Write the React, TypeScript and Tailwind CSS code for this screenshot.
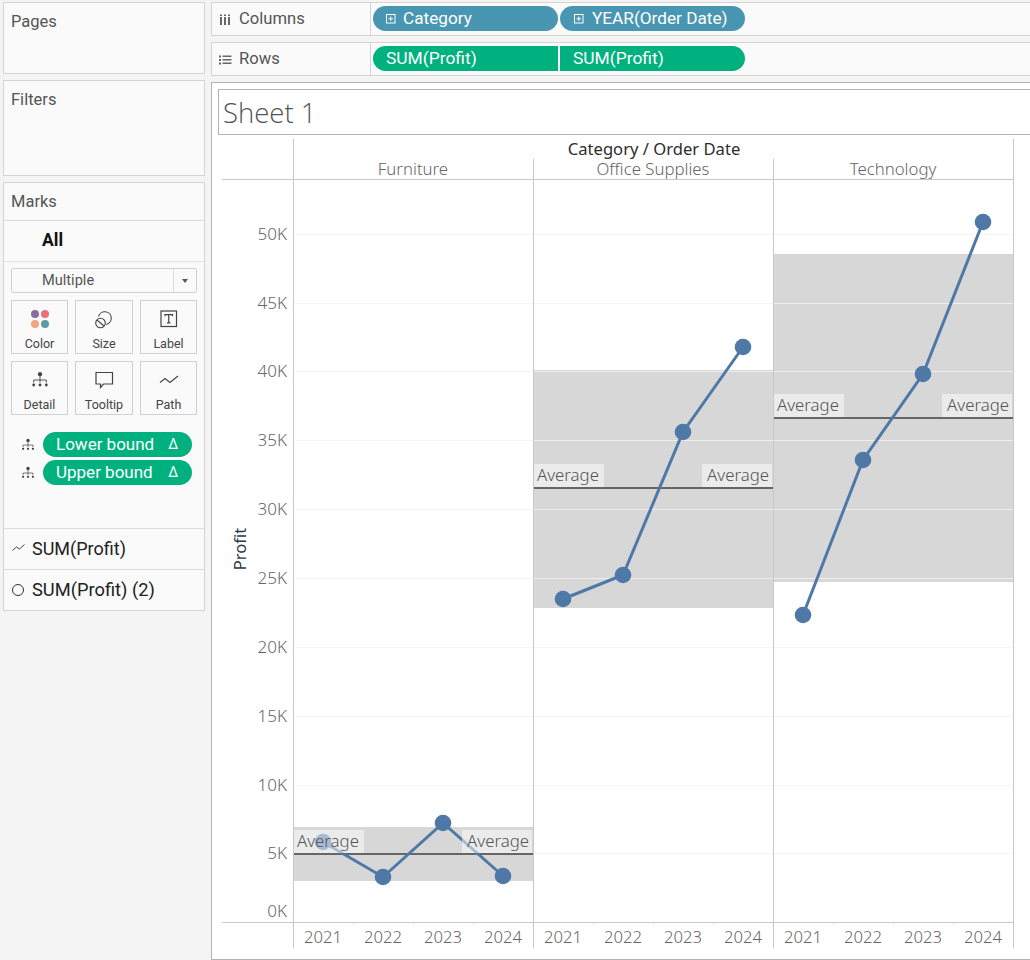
import React from "react";

const BLUE = "#4e79a7";
const F = "'Roboto', 'Liberation Sans', sans-serif";
const C = "'Noto Sans', 'Open Sans', sans-serif";

const ticks = [
  ["50K", 234.5], ["45K", 303.5], ["40K", 371.5], ["35K", 440.5], ["30K", 509.5],
  ["25K", 578.5], ["20K", 647.5], ["15K", 716.5], ["10K", 785.5], ["5K", 853.5],
] as const;

const panes = [
  { x: 293, name: "Furniture", band: [827, 881], avg: 854, labelY: 830, pts: [[323, 842], [383, 877], [443, 823], [503, 876]] },
  { x: 533, name: "Office Supplies", band: [370, 608], avg: 488, labelY: 464, pts: [[563, 599], [623, 575], [683, 432], [743, 347]] },
  { x: 773, name: "Technology", band: [254, 582], avg: 418, labelY: 394, pts: [[803, 615], [863, 460], [923, 374], [983, 222]] },
];

function Panel({ title, className }: { title: string; className: string }) {
  return (
    <div className={`border border-[#d4d4d4] bg-[#fafafa] px-[7px] pt-[9px] text-[16.5px] leading-[20px] text-[#555] ${className}`}>
      {title}
    </div>
  );
}

function Tree({ size = 20 }: { size?: number }) {
  return (
    <svg width={size} height={size} viewBox="0 0 20 20" fill="#444" stroke="#444">
      <circle cx="10" cy="3.5" r="2.4" stroke="none" />
      <path d="M10 5v8M3 10h14M3 10v3M17 10v3" fill="none" strokeWidth="1" />
      <circle cx="3" cy="15.5" r="1.6" stroke="none" />
      <circle cx="10" cy="15.5" r="1.6" stroke="none" />
      <circle cx="17" cy="15.5" r="1.6" stroke="none" />
    </svg>
  );
}

function MarkButton({ label, children }: { label: string; children: React.ReactNode }) {
  return (
    <div className="flex h-[54px] flex-col items-center border border-[#d0d0d0] pt-[7px]">
      <div className="flex h-[22px] items-center justify-center">{children}</div>
      <div className="mt-[6px] text-[12.5px] leading-[16px] text-[#444]">{label}</div>
    </div>
  );
}

function Plus() {
  return (
    <svg width="10" height="10" viewBox="0 0 10 10" fill="none" stroke="#fff" strokeWidth="1" className="shrink-0">
      <rect x="0.5" y="0.5" width="8.5" height="8.5" />
      <path d="M2.5 4.75h4.5M4.75 2.5v4.5" />
    </svg>
  );
}

function Shelf({ label, icon, children }: { label: string; icon: React.ReactNode; children: React.ReactNode }) {
  return (
    <div className="flex h-[34px] border border-r-0 border-[#d4d4d4] bg-[#fafafa]">
      <div className="flex w-[159px] items-center border-r border-[#d4d4d4] pl-[7px] pt-[1px] text-[16.6px] text-[#555]">
        <span className="flex w-[20px] items-center">{icon}</span>
        {label}
      </div>
      <div className="flex items-start pl-[2px] pt-[3px]">{children}</div>
    </div>
  );
}

function BoundPill({ label }: { label: string }) {
  return (
    <div className="flex items-center gap-[8px] pl-[17px]">
      <Tree size={14} />
      <div className="flex h-[25px] w-[149px] items-center justify-between rounded-full bg-[#00b180] pl-[13px] pr-[14px] text-[17px] text-white">
        <span>{label}</span>
        <span className="text-[14px]">Δ</span>
      </div>
    </div>
  );
}

function Chart() {
  const common = { fontSize: 16.8, fontWeight: 300 };
  return (
    <svg width="818" height="824" viewBox="212 136 818 824" className="block" style={{ fontFamily: C }}>
      {panes.map((p) => (
        <rect key={p.name} x={p.x} y={p.band[0]} width="240" height={p.band[1] - p.band[0]} fill="#d7d7d7" />
      ))}
      {ticks.map(([, y]) => (
        <line key={y} x1="293" x2="1013" y1={y} y2={y} stroke="#f3f3f3" strokeOpacity="0.85" />
      ))}
      {[353, 413, 473, 593, 653, 713, 833, 893, 953].map((x) => (
        <line key={x} x1={x + 0.5} x2={x + 0.5} y1="922" y2="926" stroke="#ececec" />
      ))}
      <line x1="293.5" x2="293.5" y1="139" y2="948" stroke="#c8c8c8" />
      <line x1="533.5" x2="533.5" y1="159" y2="948" stroke="#c8c8c8" />
      <line x1="773.5" x2="773.5" y1="159" y2="948" stroke="#c8c8c8" />
      <line x1="1013.5" x2="1013.5" y1="139" y2="948" stroke="#c8c8c8" />
      <line x1="222" x2="1013" y1="179.5" y2="179.5" stroke="#c8c8c8" />
      <line x1="222" x2="1013" y1="922.5" y2="922.5" stroke="#c8c8c8" />

      {panes.map((p) => (
        <g key={p.name}>
          <line x1={p.x + 1} x2={p.x + 240} y1={p.avg} y2={p.avg} stroke="#666" strokeWidth="2" />
          <polyline points={p.pts.map((q) => q.join(",")).join(" ")} fill="none" stroke={BLUE} strokeWidth="3" />
          {p.pts.map(([x, y]) => (
            <circle key={x} cx={x} cy={y} r="8.3" fill={BLUE} />
          ))}
          <rect x={p.x + 1} y={p.labelY} width="70" height="23" fill="#ffffff" fillOpacity="0.5" />
          <rect x={p.x + 169} y={p.labelY} width="70" height="23" fill="#ffffff" fillOpacity="0.5" />
          <text x={p.x + 4} y={p.labelY + 17} {...common} fill="#555">Average</text>
          <text x={p.x + 236} y={p.labelY + 17} {...common} fill="#555" textAnchor="end">Average</text>
          <text x={p.x + 120} y="174.5" {...common} fill="#666" textAnchor="middle">{p.name}</text>
          {["2021", "2022", "2023", "2024"].map((yr, i) => (
            <text key={yr} x={p.x + 30 + i * 60} y="943" fontSize="16.7" fontWeight="300" fill="#666" textAnchor="middle">{yr}</text>
          ))}
        </g>
      ))}

      {ticks.map(([t, y]) => (
        <text key={t} x="287" y={y + 5.5} fontSize="17" fontWeight="300" fill="#666" textAnchor="end">{t}</text>
      ))}
      <text x="287" y="916.5" fontSize="17" fontWeight="300" fill="#666" textAnchor="end">0K</text>
      <text x="654" y="154.5" fontSize="16.6" fontWeight="400" fill="#2d2d2d" textAnchor="middle">Category / Order Date</text>
      <text transform="translate(245.5 549) rotate(-90)" fontSize="16.6" fontWeight="400" fill="#2b3a4a" textAnchor="middle">Profit</text>
    </svg>
  );
}

export default function App() {
  return (
    <div className="flex h-[960px] w-[1030px] gap-[6px] overflow-hidden bg-[#f4f4f4] pl-[3px] pt-[2px]" style={{ fontFamily: F }}>
      <div className="flex w-[202px] shrink-0 flex-col gap-[6px]">
        <Panel title="Pages" className="h-[72px]" />
        <Panel title="Filters" className="h-[96px]" />
        <div className="flex h-[429px] flex-col border border-[#d4d4d4] bg-[#fafafa]">
          <div className="h-[38px] border-b border-[#dcdcdc] px-[7px] pt-[9px] text-[16.5px] leading-[20px] text-[#555]">Marks</div>
          <div className="h-[41px] border-b border-[#e2e2e2] pl-[38px] pt-[9px] text-[17.5px] font-bold leading-[20px] text-[#111]">All</div>
          <div className="mx-[7px] mt-[6px] flex h-[25px] rounded-[2px] border border-[#d0d0d0]">
            <div className="flex-1 pl-[30px] text-[14.6px] leading-[23px] text-[#555]">Multiple</div>
            <div className="flex w-[23px] items-center justify-center border-l border-[#dcdcdc]">
              <div className="h-0 w-0 border-x-[3.5px] border-t-[4px] border-x-transparent border-t-[#555]" />
            </div>
          </div>
          <div className="mx-[7px] mt-[7px] grid grid-cols-[57px_58px_57px] gap-x-[7px] gap-y-[7px]">
            <MarkButton label="Color">
              <div className="grid grid-cols-2 gap-[2px]">
                <div className="h-[8px] w-[8px] rounded-full bg-[#8a6d9b]" />
                <div className="h-[8px] w-[8px] rounded-full bg-[#ee6e7d]" />
                <div className="h-[8px] w-[8px] rounded-full bg-[#f0a67e]" />
                <div className="h-[8px] w-[8px] rounded-full bg-[#5f9aa3]" />
              </div>
            </MarkButton>
            <MarkButton label="Size">
              <svg width="20" height="20" viewBox="0 0 20 20" fill="none" stroke="#444" strokeWidth="1.1">
                <path d="M4.5 7.5a6.5 6.5 0 1 1 7.8 8" />
                <circle cx="6.5" cy="14" r="4.8" />
                <path d="M3 11l7 6" />
              </svg>
            </MarkButton>
            <MarkButton label="Label">
              <svg width="18" height="18" viewBox="0 0 18 18" fill="none" stroke="#444">
                <rect x="1" y="1" width="15.5" height="15.5" strokeWidth="1.2" />
                <path d="M5 6.2V4.6h7.5v1.6M8.75 4.6v8.2M7 12.8h3.5" strokeWidth="1.2" />
              </svg>
            </MarkButton>
            <MarkButton label="Detail"><Tree size={18} /></MarkButton>
            <MarkButton label="Tooltip">
              <svg width="20" height="18" viewBox="0 0 20 18" fill="none" stroke="#444" strokeWidth="1.2">
                <path d="M2 1.5h16.5v11.5H9.5L6.5 16.5V13H2z" />
              </svg>
            </MarkButton>
            <MarkButton label="Path">
              <svg width="20" height="14" viewBox="0 0 20 14" fill="none" stroke="#444" strokeWidth="1.2">
                <path d="M1 9.5l5-4 5 4 8-6.5" />
              </svg>
            </MarkButton>
          </div>
          <div className="mt-[17px] flex flex-col gap-[3px]">
            <BoundPill label="Lower bound" />
            <BoundPill label="Upper bound" />
          </div>
          <div className="mt-[43px] flex h-[42px] items-center gap-[7px] border-y border-[#dcdcdc] pb-[2px] pl-[8px] text-[18px] text-[#222]">
            <svg width="13" height="8" viewBox="0 0 13 8" fill="none" stroke="#444" strokeWidth="1">
              <path d="M0.5 6.5l4-3.5 3 2 5-4.5" />
            </svg>
            SUM(Profit)
          </div>
          <div className="flex h-[39px] items-center gap-[8px] pl-[8px] text-[18.3px] text-[#222]">
            <div className="h-[12px] w-[12px] rounded-full border border-[#333]" />
            SUM(Profit) (2)
          </div>
        </div>
      </div>

      <div className="flex w-[819px] shrink-0 flex-col gap-[6px]">
        <Shelf
          label="Columns"
          icon={
            <svg width="12" height="12" viewBox="0 0 12 12" fill="#666">
              <rect x="1" y="3" width="2" height="8" /><rect x="5" y="3" width="2" height="8" /><rect x="9" y="3" width="2" height="8" />
              <rect x="1" y="0.5" width="2" height="1.5" /><rect x="5" y="0.5" width="2" height="1.5" /><rect x="9" y="0.5" width="2" height="1.5" />
            </svg>
          }
        >
          <div className="flex h-[25px] w-[185px] items-center gap-[7px] rounded-full bg-[#4996b2] pl-[13px] text-[17.2px] text-white"><Plus />Category</div>
          <div className="ml-[2px] flex h-[25px] w-[185px] items-center gap-[8px] rounded-full bg-[#4996b2] pl-[14px] text-[17.2px] text-white"><Plus />YEAR(Order Date)</div>
        </Shelf>
        <Shelf
          label="Rows"
          icon={
            <svg width="13" height="10" viewBox="0 0 13 10" fill="#666">
              <rect x="0" y="0.5" width="2" height="2" /><rect x="3.5" y="0.5" width="9" height="1.5" />
              <rect x="0" y="4" width="2" height="2" /><rect x="3.5" y="4" width="9" height="1.5" />
              <rect x="0" y="7.5" width="2" height="2" /><rect x="3.5" y="7.5" width="9" height="1.5" />
            </svg>
          }
        >
          <div className="flex h-[25px] w-[185px] items-center rounded-l-full bg-[#00b180] pl-[13px] text-[17.4px] text-white">SUM(Profit)</div>
          <div className="ml-[2px] flex h-[25px] w-[185px] items-center rounded-r-full bg-[#00b180] pl-[13px] text-[17.4px] text-white">SUM(Profit)</div>
        </Shelf>
        <div className="h-[878px] border border-r-0 border-[#b4b4b4] bg-white">
          <div className="mb-[1px] ml-[6px] mt-[6px] flex h-[46px] items-center border border-r-0 border-[#b4b4b4] pl-[4px] pt-[2px] text-[27.5px] font-light text-[#555]" style={{ fontFamily: "'Open Sans', sans-serif" }}>
            Sheet 1
          </div>
          <Chart />
        </div>
      </div>
    </div>
  );
}
